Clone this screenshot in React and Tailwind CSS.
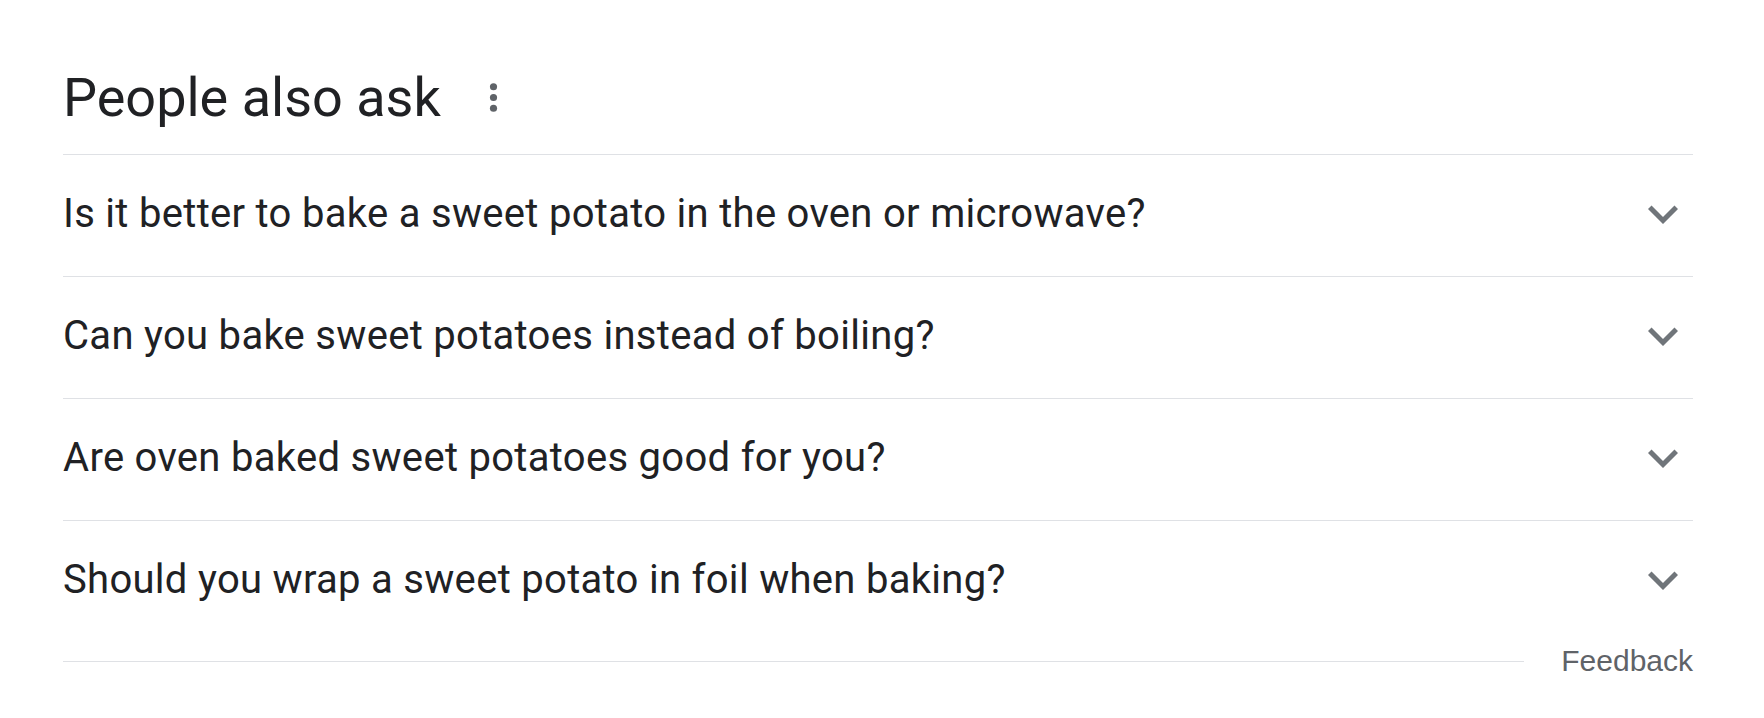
import React from 'react';

const questions = [
    'Is it better to bake a sweet potato in the oven or microwave?',
    'Can you bake sweet potatoes instead of boiling?',
    'Are oven baked sweet potatoes good for you?',
    'Should you wrap a sweet potato in foil when baking?',
];

const MoreVert = () => (
    <svg width="43" height="43" viewBox="0 0 24 24" fill="#5f6368">
        <circle cx="12" cy="6" r="2" />
        <circle cx="12" cy="12" r="2" />
        <circle cx="12" cy="18" r="2" />
    </svg>
);

const ExpandMore = () => (
    <svg width="60" height="60" viewBox="0 0 24 24" fill="#70757a">
        <path d="M16.59 8.59L12 13.17 7.41 8.59 6 10l6 6 6-6z" />
    </svg>
);

const App = () => {
    return (
        <div className="w-[1764px] h-[718px] bg-white pl-[63px] pr-[71px] font-['Roboto',sans-serif] text-[#202124]">
            {/* header */}
            <div className="flex items-center gap-[31px] pt-[70px] pb-[29px]">
                <h2 className="text-[54px] leading-[55px] font-normal">People also ask</h2>
                <MoreVert />
            </div>

            {/* questions */}
            <div>
                {questions.map((q, i) => (
                    <div
                        key={i}
                        className="flex items-center justify-between h-[122px] border-t border-[#dfe1e5] pb-[3px]"
                    >
                        <span className="text-[40px] leading-[40px] tracking-[0.3px]">{q}</span>
                        <ExpandMore />
                    </div>
                ))}
            </div>

            {/* feedback row */}
            <div className="flex items-center gap-[37px] pt-[4px]">
                <div className="flex-1 h-px bg-[#dfe1e5]" />
                <span className="font-['Liberation_Sans',Arial,sans-serif] text-[30px] leading-[30px] text-[#5f6368]">
                    Feedback
                </span>
            </div>
        </div>
    );
};

export default App;
